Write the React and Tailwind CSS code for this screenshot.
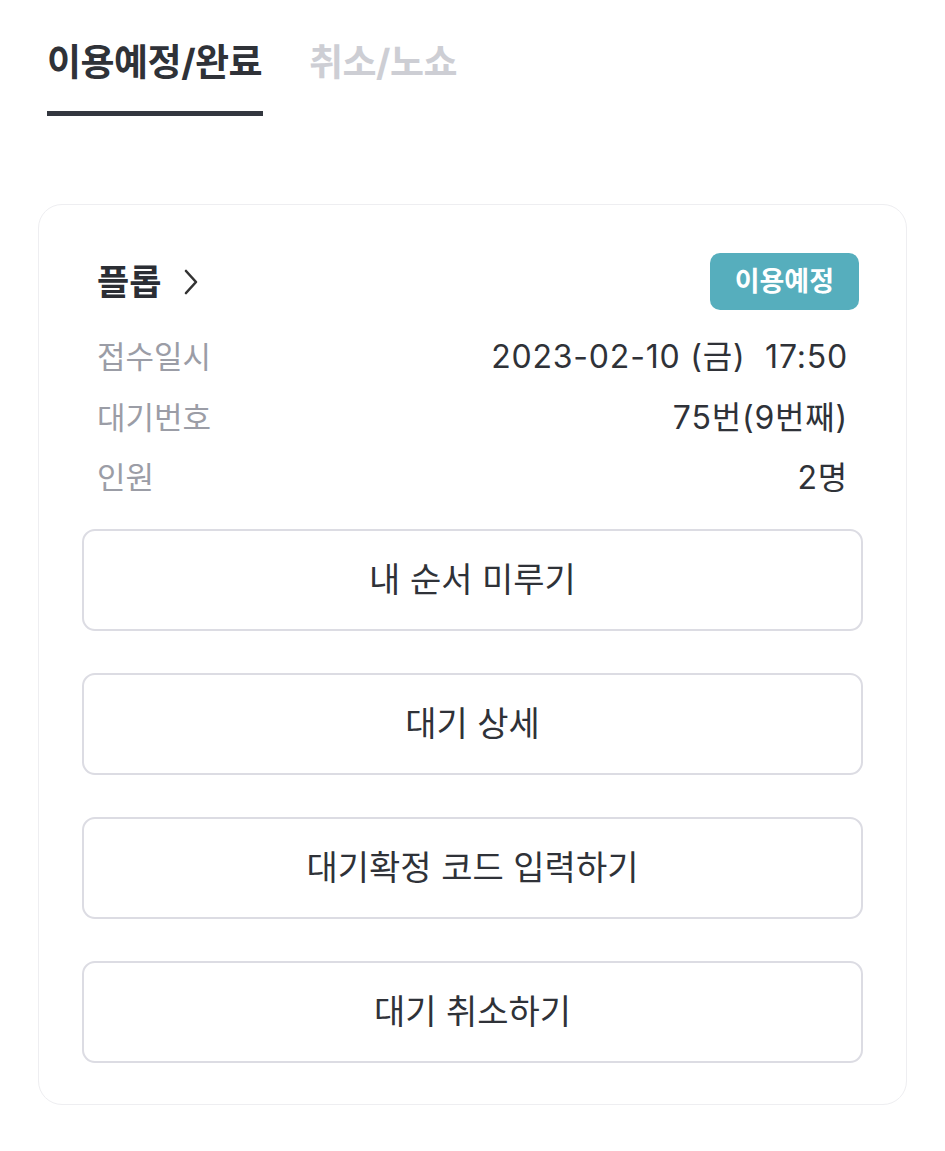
import React from 'react';

const rows = [
  { label: '접수일시', value: '2023-02-10 (금)  17:50' },
  { label: '대기번호', value: '75번(9번째)' },
  { label: '인원', value: '2명' },
];

const actions = ['내 순서 미루기', '대기 상세', '대기확정 코드 입력하기', '대기 취소하기'];

export default function App() {
  return (
    <div
      className="min-h-screen bg-white text-[#2f3238]"
      style={{ fontFamily: 'Inter, "Noto Sans CJK KR", "Noto Sans", sans-serif' }}
    >
      <div className="flex gap-[46px] pl-[47px] pt-[36px]">
        <div className="flex flex-col">
          <div className="text-[37px] font-bold leading-[54px] tracking-[-0.5px] text-[#2f3238] whitespace-pre">이용예정/완료</div>
          <div className="mt-[21px] h-[5px] w-[216px] bg-[#33373f]" />
        </div>
        <div className="text-[37px] font-bold leading-[54px] tracking-[-0.5px] text-[#cdced4]">취소/노쇼</div>
      </div>

      <div className="mx-[38px] mt-[88px] rounded-[24px] border border-[#eeeef1] px-[43px] pt-[48px] pb-[41px]">
        <div className="flex items-center justify-between pl-[15px] pr-[4px]">
          <div className="flex items-center gap-[22px]">
            <span className="text-[35px] font-bold leading-[44px] text-[#2b2e34]">플롭</span>
            <svg width="16" height="26" viewBox="0 0 16 26" fill="none">
              <path d="M3 2 L13 13 L3 24" stroke="#333" strokeWidth="2.6" strokeLinecap="round" strokeLinejoin="round" />
            </svg>
          </div>
          <span className="rounded-[10px] bg-[#56aebd] px-[25px] py-[8px] text-[27px] font-bold leading-[41px] text-white">이용예정</span>
        </div>

        <div className="mt-[17px] flex flex-col pl-[15px] pr-[15px]">
          {rows.map(r => (
            <div key={r.label} className="flex h-[60.5px] items-center justify-between text-[31px]">
              <span className="text-[#9b9da6]">{r.label}</span>
              <span className="whitespace-pre text-[32px] tracking-[0.8px] text-[#2f3238]">{r.value}</span>
            </div>
          ))}
        </div>

        <div className="mt-[20px] flex flex-col gap-[42px]">
          {actions.map(a => (
            <button
              key={a}
              className="h-[102px] w-full rounded-[13px] border-2 border-[#dcdce3] bg-white text-[34px] text-[#2f3238]"
            >
              {a}
            </button>
          ))}
        </div>
      </div>
    </div>
  );
}
